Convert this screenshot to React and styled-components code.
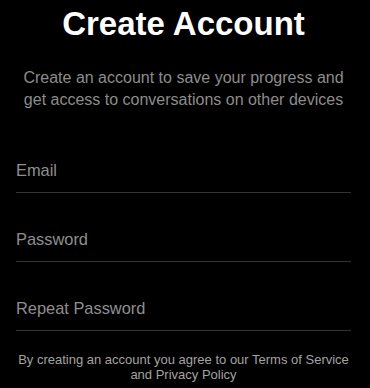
import React from "react";
import styled, { createGlobalStyle } from "styled-components";

const GlobalStyle = createGlobalStyle`
  html, body {
    margin: 0;
    padding: 0;
    background: #000;
  }
  body {
    font-family: "Liberation Sans", Arial, sans-serif;
  }
`;

const Page = styled.div`
  width: 370px;
  height: 388px;
  box-sizing: border-box;
  padding: 5px 19px 0 16px;
  background: #000;
  display: flex;
  flex-direction: column;
`;

const Title = styled.h1`
  margin: 0;
  font-size: 33px;
  line-height: 38px;
  font-weight: 700;
  color: #fff;
  text-align: center;
`;

const Subtitle = styled.p`
  margin: 24px 0 0;
  font-size: 16px;
  line-height: 22px;
  color: #8c8c8c;
  text-align: center;
`;

const Form = styled.form`
  display: flex;
  flex-direction: column;
  gap: 22px;
  margin-top: 35px;
`;

const Field = styled.input`
  height: 44px;
  box-sizing: content-box;
  padding: 2px 0 0;
  border: none;
  border-bottom: 1px solid #333;
  background: transparent;
  color: #fff;
  font-family: inherit;
  font-size: 16.4px;
  outline: none;

  &::placeholder {
    color: #8f8f8f;
  }
`;

const Terms = styled.p`
  margin: 21px 0 0;
  font-size: 13px;
  line-height: 15px;
  color: #a3a3a3;
  text-align: center;
`;

export default function App() {
  return (
    <>
      <GlobalStyle />
      <Page>
        <Title>Create Account</Title>
        <Subtitle>
          Create an account to save your progress and get access to
          conversations on other devices
        </Subtitle>
        <Form onSubmit={(e) => e.preventDefault()}>
          <Field type="email" placeholder="Email" />
          <Field type="password" placeholder="Password" />
          <Field type="password" placeholder="Repeat Password" />
        </Form>
        <Terms>
          By creating an account you agree to our Terms of Service and Privacy
          Policy
        </Terms>
      </Page>
    </>
  );
}
